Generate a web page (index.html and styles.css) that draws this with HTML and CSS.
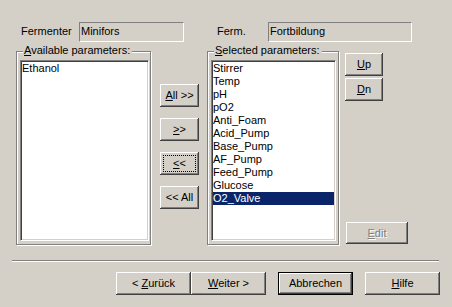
FILE: index.html
```html
<!DOCTYPE html>
<html>
<head>
<meta charset="utf-8">
<link rel="stylesheet" href="styles.css">
</head>
<body>
<div class="dialog">
  <div class="top-row">
    <span class="lbl lbl-ferm">Fermenter</span>
    <div class="field field-ferm">Minifors</div>
    <span class="lbl lbl-ferm2">Ferm.</span>
    <div class="field field-ferm2">Fortbildung</div>
  </div>

  <div class="mid-row">
    <div class="group group-left">
      <span class="group-label"><u>A</u>vailable parameters:</span>
      <div class="list list-left">
        <div class="item">Ethanol</div>
      </div>
    </div>

    <div class="move-col">
      <div class="btn btn-move"><span><u>A</u>ll &gt;&gt;</span></div>
      <div class="btn btn-move"><span><u>&gt;</u>&gt;</span></div>
      <div class="btn btn-move focus"><span><u>&lt;</u>&lt;</span></div>
      <div class="btn btn-move"><span>&lt;&lt; All</span></div>
    </div>

    <div class="group group-right">
      <span class="group-label"><u>S</u>elected parameters:</span>
      <div class="list list-right">
        <div class="item">Stirrer</div>
        <div class="item">Temp</div>
        <div class="item">pH</div>
        <div class="item">pO2</div>
        <div class="item">Anti_Foam</div>
        <div class="item">Acid_Pump</div>
        <div class="item">Base_Pump</div>
        <div class="item">AF_Pump</div>
        <div class="item">Feed_Pump</div>
        <div class="item">Glucose</div>
        <div class="item selected">O2_Valve</div>
      </div>
    </div>

    <div class="order-col">
      <div class="btn btn-order"><span><u>U</u>p</span></div>
      <div class="btn btn-order"><span><u>D</u>n</span></div>
      <div class="btn btn-edit disabled"><span><u>E</u>dit</span></div>
    </div>
  </div>

  <div class="separator"></div>

  <div class="bottom-row">
    <div class="btn btn-nav"><span>&lt; <u>Z</u>urück</span></div>
    <div class="btn btn-nav"><span><u>W</u>eiter &gt;</span></div>
    <div class="btn btn-nav btn-default"><span>Abbrechen</span></div>
    <div class="btn btn-nav"><span><u>H</u>ilfe</span></div>
  </div>
</div>
</body>
</html>
```

FILE: styles.css
```css
* { box-sizing: border-box; }

html, body {
  margin: 0;
  padding: 0;
  background: #d4d0c8;
}

body {
  width: 452px;
  height: 307px;
  overflow: hidden;
  font-family: "Liberation Sans", Arial, sans-serif;
  font-size: 11px;
  line-height: 13px;
  color: #000;
}

.dialog {
  width: 452px;
  height: 307px;
  padding-top: 22px;
}

u { text-decoration: underline; text-underline-offset: 1px; }

/* top row */
.top-row {
  display: flex;
  align-items: flex-start;
  height: 20px;
}

.lbl {
  display: block;
  padding-top: 3px;
}

.lbl-ferm { margin-left: 21px; width: 58px; }
.lbl-ferm2 { margin-left: 33px; width: 51px; }

.field {
  height: 20px;
  padding: 2px 0 0 1px;
  border-top: 1px solid #808080;
  border-left: 1px solid #808080;
  border-bottom: 1px solid #fff;
  border-right: 1px solid #fff;
}

.field-ferm { width: 105px; }
.field-ferm2 { width: 144px; }

/* middle row */
.mid-row {
  display: flex;
  align-items: flex-start;
  margin-top: 9px;
  height: 194px;
}

.group {
  height: 194px;
  border: 1px solid #808080;
  box-shadow: inset 1px 1px 0 #fff, 1px 1px 0 #fff;
  padding-left: 2px;
}

.group-left { margin-left: 16px; width: 135px; }
.group-right { margin-left: 8px; width: 132px; }

.group-label {
  display: block;
  width: fit-content;
  margin: -8px 0 0 4px;
  padding: 0 2px 0 1px;
  background: #d4d0c8;
  line-height: 13px;
}

.list {
  margin-top: 3px;
  height: 181px;
  background: #fff;
  border-top: 1px solid #808080;
  border-left: 1px solid #808080;
  border-bottom: 1px solid #fff;
  border-right: 1px solid #fff;
  box-shadow: inset 1px 1px 0 #404040, inset -1px -1px 0 #d4d0c8;
  padding: 1px 1px 0 1px;
  overflow: hidden;
}

.list-left { width: 129px; margin-left: 1px; }
.list-right { width: 125px; margin-left: 1px; }

.item {
  height: 13px;
  line-height: 13px;
  padding-left: 0;
  white-space: nowrap;
}

.item.selected {
  background: #0a246a;
  color: #fff;
}

/* buttons */
.btn {
  display: flex;
  align-items: center;
  justify-content: center;
  height: 23px;
  background: #d4d0c8;
  box-shadow:
    inset -1px -1px 0 #404040,
    inset 1px 1px 0 #fff,
    inset -2px -2px 0 #808080,
    inset 2px 2px 0 #d4d0c8;
  white-space: nowrap;
}

.btn span { display: block; line-height: 13px; }

.move-col {
  display: flex;
  flex-direction: column;
  gap: 11px;
  margin-left: 9px;
  padding-top: 33px;
  width: 39px;
}

.btn-move { width: 39px; }

.btn.focus {
  outline: 1px dotted #000;
  outline-offset: -4px;
}

.order-col {
  display: flex;
  flex-direction: column;
  gap: 2px;
  margin-left: 6px;
  padding-top: 2px;
  height: 193px;
}

.btn-order { width: 38px; }

.btn-edit {
  width: 62px;
  height: 22px;
  margin-top: auto;
  margin-left: 1px;
}

.btn.disabled {
  color: #808080;
  text-shadow: 1px 1px 0 #fff;
}

/* separator */
.separator {
  margin: 15px 0 0 12px;
  width: 427px;
  height: 2px;
  border-top: 1px solid #808080;
  border-bottom: 1px solid #fff;
}

/* bottom row */
.bottom-row {
  display: flex;
  margin-top: 10px;
  padding-left: 116px;
}

.btn-nav { width: 75px; }
.btn-nav + .btn-nav { margin-left: 12px; }
.btn-nav:nth-child(2) { margin-left: 0; }

.btn-default {
  box-shadow:
    inset 0 0 0 1px #000,
    inset -2px -2px 0 #404040,
    inset 2px 2px 0 #fff,
    inset -3px -3px 0 #808080,
    inset 3px 3px 0 #d4d0c8;
}
```
